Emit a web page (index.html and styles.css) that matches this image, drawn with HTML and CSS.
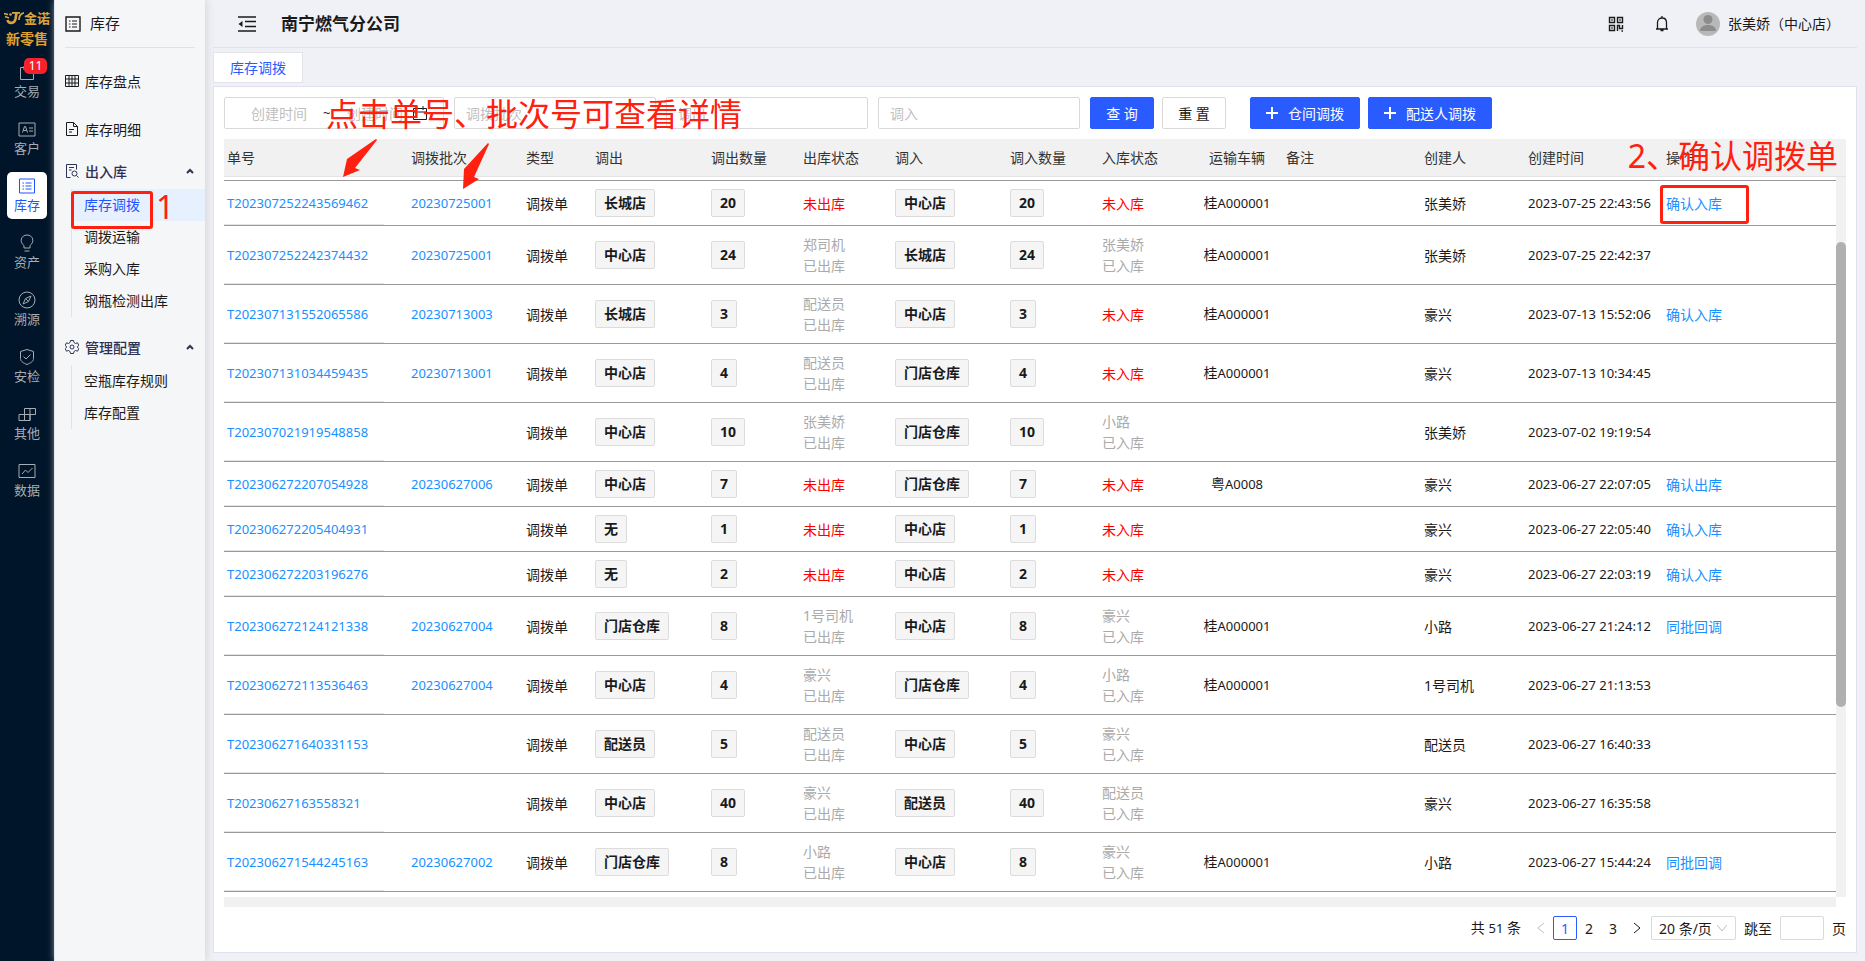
FILE: index.html
```html
<!DOCTYPE html>
<html lang="zh-CN">

<head>
    <meta charset="UTF-8">
    <title>库存调拨</title>
    <link rel="stylesheet" href="styles.css">
</head>

<body>
    <nav class="rail">
        <div class="logo">
            <svg class="logo-mark" width="20" height="14" viewBox="0 0 20 14" fill="none" stroke="#d9a43b">
                <path d="M0 2.500l4 1M1 5.500l4 1.500" stroke-width="1.800" />
                <path d="M3.500 9c1 4 7 4 8-1l1-6" stroke-width="2.600" />
                <path d="M8 1.800h8M15 9c0-4 2-6.500 5-7.200" stroke-width="1.800" />
                <circle cx="6.500" cy="3.500" r="1.300" fill="#d9a43b" stroke="none" />
            </svg>
            <span class="logo-name">金诺</span>
        </div>
        <div class="logo-sub">新零售</div>
        <a class="rail-item" href="#">
            <svg width="18" height="18" viewBox="0 0 18 18"><path d="M2.500 4.500h13v12h-13zM6 7V3h6v4" /></svg>
            交易
            <span class="badge">11</span>
        </a>
        <a class="rail-item" href="#">
            <svg width="18" height="18" viewBox="0 0 18 18"><path d="M1 3h16v13H1zM4.500 12.500l2-6h1l2 6M5.500 10.500h3M11 8h4M11 11h4" /></svg>
            客户
        </a>
        <a class="rail-item active" href="#">
            <svg width="18" height="18" viewBox="0 0 18 18"><path d="M1.500 2h15v14h-15zM7.500 6h6M7.500 9h6M7.500 12h6M4.500 6h1.500M4.500 9h1.500M4.500 12h1.500" /></svg>
            库存
        </a>
        <a class="rail-item" href="#">
            <svg width="18" height="18" viewBox="0 0 18 18"><path d="M6 14v-2.500C1 8 3 1 9 1s8 7 3 10.500V14zM6.500 17h5" /></svg>
            资产
        </a>
        <a class="rail-item" href="#">
            <svg width="18" height="18" viewBox="0 0 18 18"><circle cx="9" cy="9" r="8" /><path d="M13 5l-2.500 5.500L5 13l2.500-5.500zM8 8l2.500 2.500" /></svg>
            溯源
        </a>
        <a class="rail-item" href="#">
            <svg width="18" height="18" viewBox="0 0 18 18"><path d="M9 1.500l6.500 2v7c0 3-3 4.500-6.500 6-3.500-1.500-6.500-3-6.500-6v-7zM5.500 8.500L8 11l4.500-4.500" /></svg>
            安检
        </a>
        <a class="rail-item" href="#">
            <svg width="18" height="18" viewBox="0 0 18 18"><path d="M6.500 3.500h11v6h-11zM12 3.500v12M1 9.500h11v6H1zM6.500 9.500v6" /></svg>
            其他
        </a>
        <a class="rail-item" href="#">
            <svg width="18" height="18" viewBox="0 0 18 18"><path d="M1 2.500h16v13H1zM4 12l3.500-4 2.500 2.500L14.500 6" /></svg>
            数据
        </a>
    </nav>

    <aside class="sidebar">
        <div class="side-title">
            <svg width="16" height="16" viewBox="0 0 16 16"><path d="M1 1h14v14H1z" stroke-width="1.400" /><path d="M7 5h5M7 8h5M7 11h5M4 5h1.500M4 8h1.500M4 11h1.500" /></svg>
            库存
        </div>
        <a class="side-link" href="#">
            <svg width="14" height="14" viewBox="0 0 14 14"><path d="M.5 1.500h13v11H.5zM.5 5h13M.5 9h13M4 1.500v11M7 1.500v11M10 1.500v11" /></svg>
            库存盘点
        </a>
        <a class="side-link" href="#">
            <svg width="14" height="14" viewBox="0 0 14 14"><path d="M1.500.5h7l4 4v9h-11zM8.500.5v4h4M4 7.500h5M4 10h3" /></svg>
            库存明细
        </a>
        <button class="side-group">
            <svg width="14" height="14" viewBox="0 0 14 14"><path d="M5.500 13.500h-4V.5h10v5M4 3.500h5M4 6h2.500M11.500 11.500l2 2" /><circle cx="9.500" cy="9.500" r="2.500" /></svg>
            出入库
            <svg class="caret" width="8" height="6" viewBox="0 0 8 6"><path d="M1 5l3-3 3 3" /></svg>
        </button>
        <div class="side-sub">
            <a class="current" href="#">库存调拨</a>
            <a href="#">调拨运输</a>
            <a href="#">采购入库</a>
            <a href="#">钢瓶检测出库</a>
        </div>
        <button class="side-group">
            <svg width="14" height="14" viewBox="0 0 14 14"><path d="M5.500.5h3l.5 2 1.500 1 2-.7 1.300 2.400L12.300 7l1.500 1.700-1.300 2.500-2-.7-1.500 1-.5 2h-3l-.5-2-1.500-1-2 .7L.2 8.700 1.700 7 .2 5.200l1.300-2.400 2 .7 1.500-1z" /><circle cx="7" cy="7" r="2" /></svg>
            管理配置
            <svg class="caret" width="8" height="6" viewBox="0 0 8 6"><path d="M1 5l3-3 3 3" /></svg>
        </button>
        <div class="side-sub">
            <a href="#">空瓶库存规则</a>
            <a href="#">库存配置</a>
        </div>
    </aside>

    <main class="main">
        <header class="header">
            <button class="icon-btn" aria-label="收起菜单">
                <svg width="18" height="18" viewBox="0 0 18 18"><path d="M0 2h18M7 6.500h11M7 11.500h11M0 16h18" stroke-width="1.600" /><path d="M4.500 6v6L.5 9z" class="solid" /></svg>
            </button>
            <h1>南宁燃气分公司</h1>
            <button class="icon-btn" aria-label="二维码">
                <svg width="16" height="16" viewBox="0 0 16 16"><path d="M1.500 1.500h5v5h-5zM9.500 1.500h5v5h-5zM1.500 9.500h5v5h-5zM9.500 15V9.500h2v3h3V9M13.500 15h1.500M11.500 15h.1" stroke-width="1.400" /><path d="M3.300 3.300h1.400v1.400H3.300zM11.300 3.300h1.400v1.400h-1.400zM3.300 11.300h1.400v1.400H3.300z" class="solid" /></svg>
            </button>
            <button class="icon-btn bell" aria-label="消息">
                <svg width="14" height="16" viewBox="0 0 14 16"><path d="M1 13h12M2.500 13V6.500c0-6 9-6 9 0V13M7 0v2M5.500 14.500h3" stroke-width="1.300" /></svg>
            </button>
            <svg class="avatar" width="24" height="24" viewBox="0 0 24 24"><circle cx="12" cy="12" r="12" fill="#b8b8b8" /><circle cx="12" cy="7.500" r="4.500" fill="#8c8c8c" /><path d="M4 19c0-8 16-8 16 0z" fill="#8c8c8c" /></svg>
            <span>张美娇（中心店）</span>
        </header>

        <div class="tabs"><a class="tab" href="#">库存调拨</a></div>

        <section class="card">
            <form class="filters">
                <div class="range">
                    <input type="text" placeholder="创建时间" aria-label="开始时间">
                    <span>~</span>
                    <input type="text" placeholder="创建时间" aria-label="结束时间">
                    <svg width="14" height="14" viewBox="0 0 14 14"><path d="M.5 2.500h13v11H.5zM.5 6h13M4 0v4M10 0v4" /></svg>
                </div>
                <input class="field" type="text" placeholder="调拨批次" aria-label="调拨批次">
                <input class="field" type="text" placeholder="调出" aria-label="调出">
                <input class="field" type="text" placeholder="调入" aria-label="调入">
                <div class="actions">
                    <button type="button" class="btn primary">查 询</button>
                    <button type="button" class="btn">重 置</button>
                </div>
                <div class="actions creates">
                    <button type="button" class="btn primary add"><svg width="12" height="12" viewBox="0 0 12 12"><path d="M6 0v12M0 6h12" /></svg>仓间调拨</button>
                    <button type="button" class="btn primary add"><svg width="12" height="12" viewBox="0 0 12 12"><path d="M6 0v12M0 6h12" /></svg>配送人调拨</button>
                </div>
            </form>

            <div class="table-area">
                <table class="list">
                    <colgroup>
                        <col class="w184"><col class="w115"><col class="w69"><col class="w116"><col class="w92"><col class="w92"><col class="w115">
                        <col class="w92"><col class="w92"><col class="w92"><col class="w138"><col class="w104"><col class="w138"><col>
                    </colgroup>
                    <thead>
                        <tr>
                            <th>单号</th><th>调拨批次</th><th>类型</th><th>调出</th><th>调出数量</th><th>出库状态</th><th>调入</th>
                            <th>调入数量</th><th>入库状态</th><th class="center">运输车辆</th><th>备注</th><th>创建人</th><th>创建时间</th><th>操作</th>
                        </tr>
                    </thead>
                    <tbody id="rows"></tbody>
                </table>
                <div class="vbar">
                    <div class="vbar-head"></div>
                    <div class="vbar-track"><div class="vbar-thumb"></div></div>
                </div>
            </div>
            <div class="hbar"></div>

            <div class="pager">
                <span class="total">共 <span class="num">51</span> 条</span>
                <button class="page" disabled aria-label="上一页"><svg width="8" height="12" viewBox="0 0 8 12"><path d="M7 1L1 6l6 5" /></svg></button>
                <button class="page on">1</button>
                <button class="page">2</button>
                <button class="page">3</button>
                <button class="page" aria-label="下一页"><svg width="8" height="12" viewBox="0 0 8 12"><path d="M1 1l6 5-6 5" /></svg></button>
                <span class="size">
                    <select aria-label="每页条数"><option>20 条/页</option></select>
                    <svg width="10" height="8" viewBox="0 0 10 8"><path d="M0 1l5 6 5-6" /></svg>
                </span>
                <label for="jump">跳至</label>
                <input id="jump" class="jump" type="text">
                <span>页</span>
            </div>
        </section>
    </main>

    <!-- 操作指引标注 -->
    <div class="note note-detail">点击单号、批次号可查看详情</div>
    <div class="note note-step1">1</div>
    <div class="note note-step2">2、确认调拨单</div>
    <div class="mark mark-menu"></div>
    <div class="mark mark-confirm"></div>
    <svg class="arrow arrow-no" width="36" height="39" viewBox="0 0 36 39"><path d="M33 0L4 20 0 38 17 31 12 29 34 1z" /></svg>
    <svg class="arrow arrow-batch" width="28" height="46" viewBox="0 0 28 46"><path d="M25 0L1 26 0 46 16 36 11 34 26 1z" /></svg>

    <script>
        // 单号, 批次, 调出, 数量, 出库人, 调入, 入库人, 车辆, 创建人, 创建时间, 操作
        const data = [
            ["T202307252243569462", "20230725001", "长城店", 20, "", "中心店", "", "桂A000001", "张美娇", "2023-07-25 22:43:56", "确认入库"],
            ["T202307252242374432", "20230725001", "中心店", 24, "郑司机", "长城店", "张美娇", "桂A000001", "张美娇", "2023-07-25 22:42:37", ""],
            ["T202307131552065586", "20230713003", "长城店", 3, "配送员", "中心店", "", "桂A000001", "豪兴", "2023-07-13 15:52:06", "确认入库"],
            ["T202307131034459435", "20230713001", "中心店", 4, "配送员", "门店仓库", "", "桂A000001", "豪兴", "2023-07-13 10:34:45", ""],
            ["T202307021919548858", "", "中心店", 10, "张美娇", "门店仓库", "小路", "", "张美娇", "2023-07-02 19:19:54", ""],
            ["T202306272207054928", "20230627006", "中心店", 7, "", "门店仓库", "", "粤A0008", "豪兴", "2023-06-27 22:07:05", "确认出库"],
            ["T202306272205404931", "", "无", 1, "", "中心店", "", "", "豪兴", "2023-06-27 22:05:40", "确认入库"],
            ["T202306272203196276", "", "无", 2, "", "中心店", "", "", "豪兴", "2023-06-27 22:03:19", "确认入库"],
            ["T202306272124121338", "20230627004", "门店仓库", 8, "1号司机", "中心店", "豪兴", "桂A000001", "小路", "2023-06-27 21:24:12", "同批回调"],
            ["T202306272113536463", "20230627004", "中心店", 4, "豪兴", "门店仓库", "小路", "桂A000001", "1号司机", "2023-06-27 21:13:53", ""],
            ["T202306271640331153", "", "配送员", 5, "配送员", "中心店", "豪兴", "", "配送员", "2023-06-27 16:40:33", ""],
            ["T20230627163558321", "", "中心店", 40, "豪兴", "配送员", "配送员", "", "豪兴", "2023-06-27 16:35:58", ""],
            ["T202306271544245163", "20230627002", "门店仓库", 8, "小路", "中心店", "豪兴", "桂A000001", "小路", "2023-06-27 15:44:24", "同批回调"]
        ];

        const link = (text, cls) => text ? `<a class="${cls}" href="#">${text}</a>` : "";
        const tag = text => `<span class="tag">${text}</span>`;
        const status = (who, word) => who
            ? `<div class="done">${who}<br>已${word}</div>`
            : `<span class="todo">未${word}</span>`;

        document.getElementById("rows").innerHTML = data.map(r => `
            <tr class="${r[4] || r[6] ? "tall" : ""}">
                <td>${link(r[0], "num")}</td>
                <td>${link(r[1], "num")}</td>
                <td>调拨单</td>
                <td>${tag(r[2])}</td>
                <td>${tag(r[3])}</td>
                <td>${status(r[4], "出库")}</td>
                <td>${tag(r[5])}</td>
                <td>${tag(r[3])}</td>
                <td>${status(r[6], "入库")}</td>
                <td class="center">${r[7].replace(/[A-Z0-9]+/, '<span class="num">$&</span>')}</td>
                <td></td>
                <td>${r[8]}</td>
                <td class="num">${r[9]}</td>
                <td>${link(r[10], "")}</td>
            </tr>`).join("");
    </script>
</body>

</html>
```

FILE: styles.css
```css
* {
    box-sizing: border-box;
}

body {
    margin: 0;
    display: flex;
    min-height: 100vh;
    background: #f0f1f6;
    color: #1a1a1a;
    font: 14px/21px "Noto Sans", "Noto Sans CJK SC", sans-serif;
}

a {
    color: #1890ff;
    text-decoration: none;
}

button,
input,
select {
    font: inherit;
    color: inherit;
}

button {
    border: 0;
    padding: 0;
    background: none;
}

svg {
    flex: none;
    fill: none;
    stroke: currentColor;
}

.solid {
    fill: currentColor;
    stroke: none;
}

.num {
    font-size: 13px;
}

/* 一级导航 */
.rail {
    width: 54px;
    flex: none;
    background: #001529;
    display: flex;
    flex-direction: column;
    align-items: center;
}

.logo {
    display: flex;
    align-items: center;
    margin-top: 8px;
    height: 20px;
    color: #d9a43b;
}

.logo-name {
    font-size: 13px;
    font-weight: bold;
}

.logo-sub {
    height: 30px;
    line-height: 22px;
    font-weight: bold;
    color: #e0a030;
}

.rail-item {
    position: relative;
    display: flex;
    flex-direction: column;
    align-items: center;
    width: 40px;
    height: 47px;
    padding-top: 5px;
    margin-bottom: 10px;
    border-radius: 5px;
    font-size: 13px;
    line-height: 20px;
    color: #a6adb4;
}

.rail-item.active {
    background: #fff;
    color: #1f55ff;
}

.badge {
    position: absolute;
    top: 0;
    right: 0;
    width: 23px;
    height: 16px;
    border-radius: 5px;
    background: #f5222d;
    color: #fff;
    font-size: 12px;
    line-height: 16px;
    text-align: center;
}

/* 二级菜单 */
.sidebar {
    width: 151px;
    flex: none;
    border-left: 1px solid #e3e5ee;
    background: #f4f6f8;
    box-shadow: 2px 0 8px #d5d8dd;
}

.side-title {
    display: flex;
    align-items: center;
    gap: 9px;
    height: 48px;
    margin: 0 10px 9px;
    font-size: 15px;
    border-bottom: 1px solid #dfe1ec;
}

.side-link,
.side-group {
    display: flex;
    align-items: center;
    gap: 6px;
    width: 100%;
    height: 48px;
    padding: 0 11px 0 10px;
    color: #1a1a1a;
}

.side-group {
    height: 36px;
    font-weight: 500;
    color: #303055;
}

.caret {
    margin-left: auto;
    stroke-width: 2;
}

.side-sub {
    margin: 0 0 12px 16px;
    border-left: 1px solid #dfe1ec;
}

.side-sub a {
    display: block;
    padding-left: 12px;
    line-height: 32px;
    color: #1a1a1a;
}

.side-sub .current {
    background: #e6f0ff;
    color: #1f55ff;
}

/* 主区域 */
.main {
    flex: 1;
    min-width: 0;
    padding: 0 8px;
    display: flex;
    flex-direction: column;
}

.header {
    display: flex;
    align-items: center;
    height: 48px;
    padding: 0 17px 0 25px;
    border-bottom: 1px solid #dfe1ec;
}

.header h1 {
    margin: 0 auto 0 25px;
    font-size: 17px;
}

.icon-btn {
    display: flex;
}

.bell {
    margin: 0 27px 0 31px;
}

.avatar {
    margin-right: 8px;
    stroke: none;
}

.tabs {
    display: flex;
    padding: 4px 0 3px;
}

.tab {
    padding: 0 16px;
    border: 1px solid #e3e4ea;
    background: #fff;
    line-height: 29px;
    color: #2a5bff;
}

.card {
    flex: 1;
    margin-bottom: 8px;
    padding: 10px;
    border: 1px solid #e0e0ee;
    background: #fff;
}

.filters {
    display: flex;
    gap: 10px;
    margin-bottom: 10px;
}

.range,
.field {
    height: 32px;
    border: 1px solid #d9d9d9;
    border-radius: 2px;
    background: #fff;
}

.range {
    display: flex;
    align-items: center;
    width: 220px;
    padding: 0 12px 0 10px;
}

.range input {
    width: 82px;
    padding: 0 0 0 16px;
    border: 0;
    background: none;
}

.range span {
    width: 14px;
    padding-left: 6px;
    font-size: 13px;
}

.field {
    width: 202px;
    padding: 0 11px;
}

::placeholder {
    color: #bfbfbf;
}

.actions {
    display: flex;
    gap: 8px;
}

.creates {
    margin-left: 14px;
}

.btn {
    width: 64px;
    height: 32px;
    border: 1px solid #d9d9d9;
    border-radius: 2px;
    background: #fff;
}

.btn.primary {
    border-color: #2a5bff;
    background: #2a5bff;
    color: #fff;
}

.btn.add {
    display: flex;
    align-items: center;
    justify-content: center;
    gap: 10px;
    width: auto;
    padding: 0 15px;
}

.add svg {
    stroke-width: 2;
}

.table-area {
    display: flex;
}

.list {
    flex: 1;
    min-width: 0;
    table-layout: fixed;
    border-collapse: separate;
    border-spacing: 0;
    margin-bottom: 5px;
}

.w69 { width: 69px; }
.w92 { width: 92px; }
.w104 { width: 104px; }
.w115 { width: 115px; }
.w116 { width: 116px; }
.w138 { width: 138px; }
.w184 { width: 184px; }

th,
td {
    padding: 0 3px;
    text-align: left;
    white-space: nowrap;
}

th {
    height: 38px;
    background: #f1f1f1;
    border-bottom: 1px solid #e4e4e4;
    font-weight: normal;
    color: #333;
}

thead::after {
    content: "";
    display: table-row;
    height: 3px;
}

td {
    height: 45px;
    border-bottom: 1px solid #999;
}

.tall td {
    height: 59px;
}

tbody tr:first-child td {
    height: 46px;
    border-top: 1px solid #999;
}

/* 固定列的浅色下边线 */
td:first-child {
    background: linear-gradient(#e4e4e4, #e4e4e4) left bottom / 160px 1px no-repeat;
}

.center {
    text-align: center;
}

.tag {
    display: inline-block;
    padding: 0 8px;
    border: 1px solid #dcdcdc;
    border-radius: 2px;
    background: #f5f5f5;
    line-height: 26px;
    font-weight: bold;
    vertical-align: middle;
}

.done {
    color: #aaa;
}

.todo {
    color: #f00;
}

.vbar {
    display: flex;
    flex-direction: column;
    width: 10px;
}

.vbar-head {
    height: 38px;
    background: #f1f1f1;
    border-bottom: 1px solid #e4e4e4;
}

.vbar-track {
    flex: 1;
    padding-top: 65px;
    background: #f1f1f1;
}

.vbar-thumb {
    height: 71%;
    border-radius: 5px;
    background: #b0b0b0;
}

.hbar {
    height: 10px;
    margin-right: 10px;
    background: #f1f1f1;
}

/* 分页 */
.pager {
    display: flex;
    align-items: center;
    justify-content: flex-end;
    margin-top: 9px;
}

.total {
    margin-right: 8px;
}

.page {
    display: flex;
    align-items: center;
    justify-content: center;
    width: 24px;
    height: 24px;
    border-radius: 2px;
}

.page:disabled {
    color: #bfbfbf;
}

.page.on {
    border: 1px solid #2a5bff;
    color: #2a5bff;
}

.size {
    position: relative;
    margin: 0 8px 0 2px;
}

.size select {
    display: block;
    width: 85px;
    height: 24px;
    padding: 0 7px;
    border: 1px solid #d9d9d9;
    border-radius: 2px;
    background: #fff;
    appearance: none;
}

.size svg {
    position: absolute;
    right: 9px;
    top: 8px;
    color: #bfbfbf;
}

.jump {
    width: 44px;
    height: 24px;
    margin: 0 8px;
    border: 1px solid #d9d9d9;
    border-radius: 2px;
}

/* 标注 */
.note,
.mark,
.arrow {
    position: absolute;
    pointer-events: none;
}

.note {
    font-size: 32px;
    line-height: 40px;
    color: #ff2010;
    white-space: nowrap;
}

.note-detail {
    left: 326px;
    top: 94px;
}

.note-step1 {
    left: 156px;
    top: 187px;
}

.note-step2 {
    right: 27px;
    top: 136px;
}

.mark {
    border: 3px solid #ff2010;
    border-radius: 3px;
}

.mark-menu {
    left: 71px;
    top: 191px;
    width: 82px;
    height: 38px;
}

.mark-confirm {
    right: 116px;
    top: 185px;
    width: 89px;
    height: 39px;
}

.arrow {
    fill: #ff2010;
    stroke: none;
}

.arrow-no {
    left: 343px;
    top: 139px;
}

.arrow-batch {
    left: 463px;
    top: 143px;
}
```
